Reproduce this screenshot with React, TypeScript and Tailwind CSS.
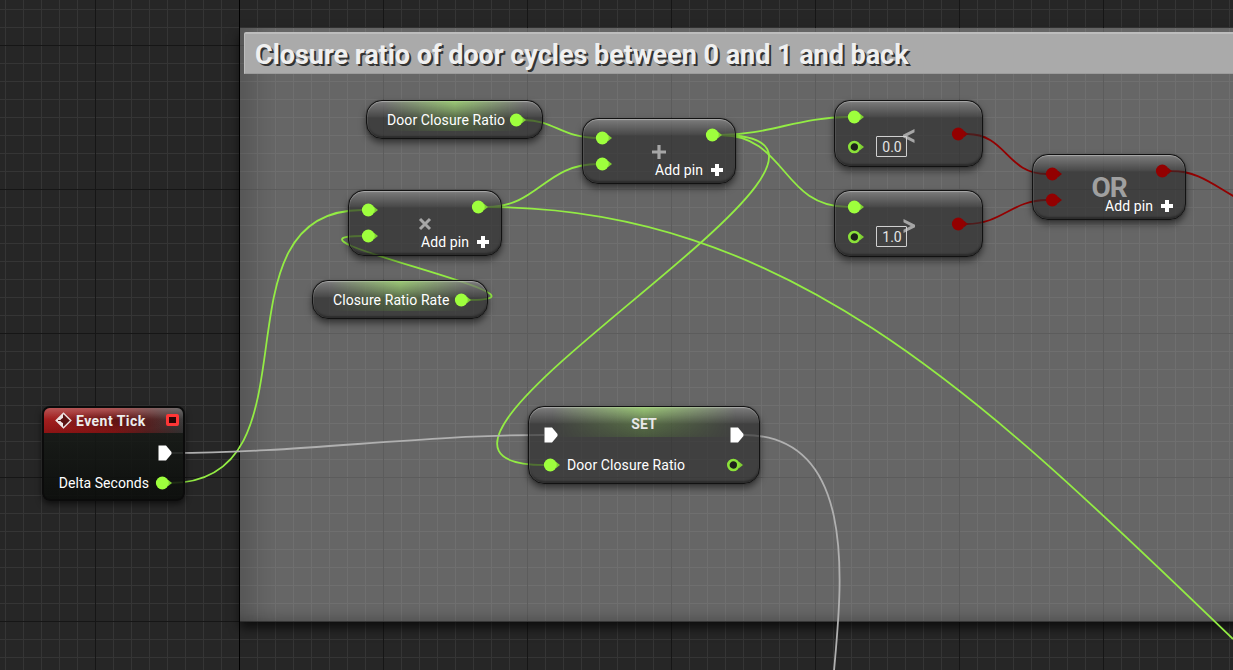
import type { ReactNode } from "react";

const GREEN = "#9eff3d";
const WIRE_GREEN = "#93ec44";
const RED = "#930000";

type Tone = "green" | "red";

function Pin({ tone = "green", hollow = false }: { tone?: Tone; hollow?: boolean }) {
  const main = tone === "green" ? GREEN : RED;
  return (
    <svg width="18" height="14" viewBox="0 0 18 14" className="block shrink-0">
      <path d="M12.6 3.4 17 7l-4.4 3.6z" fill={tone === "green" ? "#7fcf34" : "#860404"} />
      {hollow ? (
        <circle cx="7.3" cy="7" r="5" fill="#1d211b" stroke="#8be23a" strokeWidth="2.6" />
      ) : (
        <circle cx="7.3" cy="7" r="6.4" fill={main} />
      )}
    </svg>
  );
}

function ExecPin() {
  return (
    <svg width="14" height="16" viewBox="0 0 14 16" className="block shrink-0">
      <path d="M.5.5H8L13.5 7v2L8 15.5H.5z" fill="#fff" />
    </svg>
  );
}

function Gloss({ glow = false }: { glow?: boolean }) {
  return (
    <div className="pointer-events-none absolute inset-0 overflow-hidden rounded-[inherit]">
      {glow && (
        <div className="absolute inset-x-0 top-0 h-[30px] bg-gradient-to-b from-[rgba(165,225,115,0.75)] via-[rgba(125,180,80,0.42)] to-[rgba(95,145,60,0.3)] [mask-image:linear-gradient(to_right,transparent_10%,rgba(0,0,0,0.5)_30%,black_50%,rgba(0,0,0,0.5)_70%,transparent_90%)]" />
      )}
      <div className="h-[16px] bg-gradient-to-b from-white/32 to-white/4" />
    </div>
  );
}

const SHELL =
  "rounded-[16px] border-[1.5px] border-[#121212] bg-[rgba(42,42,42,0.64)] shadow-[0_0_1px_rgba(0,0,0,0.7),0_4px_7px_rgba(0,0,0,0.5),inset_0_1px_1px_rgba(255,255,255,0.35),inset_1px_0_1px_rgba(255,255,255,0.1),inset_0_-2px_2px_rgba(0,0,0,0.35)]";

function OperatorNode({ place, tone = "green", children }: { place: string; tone?: Tone; children: ReactNode }) {
  return (
    <div className={`absolute h-[66px] w-[154px] ${place}`}>
      <div className={`absolute inset-0 ${SHELL}`}>
        <Gloss />
      </div>
      <div className="absolute inset-0 flex items-center justify-center pt-[2px]">{children}</div>
      <div className="relative flex h-full justify-between px-[13px]">
        <div className="flex flex-col gap-3 pt-[13px]">
          <Pin tone={tone} />
          <Pin tone={tone} />
        </div>
        <div className="flex flex-col items-end pt-[10px]">
          <Pin tone={tone} />
          <div className="mt-[19px] flex items-center gap-2 leading-[18px]">
            <span className="tracking-[0.1px]">Add pin</span>
            <svg width="12" height="12" viewBox="0 0 12 12">
              <path d="M4 0h4v4h4v4H8v4H4V8H0V4h4z" fill="#fff" />
            </svg>
          </div>
        </div>
      </div>
    </div>
  );
}

function CompareNode({ place, value, children }: { place: string; value: string; children: ReactNode }) {
  return (
    <div className={`absolute h-[67px] w-[149px] ${place}`}>
      <div className={`absolute inset-0 ${SHELL}`}>
        <Gloss />
      </div>
      <svg width="12" height="14" viewBox="0 0 12 14" className="absolute left-[69px] top-[29px]">
        {children}
      </svg>
      <div className="relative flex h-full justify-between pl-[13px] pr-[14px]">
        <div className="flex flex-col pt-[10px]">
          <Pin />
          <div className="mt-3 flex items-center gap-[11px]">
            <Pin hollow />
            <span className="flex h-[21px] w-[31px] items-center justify-center rounded-[1px] border border-[#d0d0d0] pl-px pt-px text-[#e4e4e4]">
              {value}
            </span>
          </div>
        </div>
        <div className="pt-[27px]">
          <Pin tone="red" />
        </div>
      </div>
    </div>
  );
}

function GetterNode({ place, label }: { place: string; label: string }) {
  return (
    <div className={`absolute h-[39px] ${place}`}>
      <div className={`absolute inset-0 ${SHELL}`}>
        <Gloss glow />
      </div>
      <div className="relative flex h-full items-center justify-between pl-[21px] pr-4">
        <span className="pt-[2px] tracking-[0.09px]">{label}</span>
        <Pin />
      </div>
    </div>
  );
}

function SetterNode() {
  return (
    <div className="absolute left-[528px] top-[406px] h-[78px] w-[232px]">
      <div className={`absolute inset-0 ${SHELL}`}>
        <Gloss glow />
      </div>
      <div className="absolute inset-x-0 top-[9px] text-center font-bold leading-[18px] text-[#e8e8e8]">SET</div>
      <div className="relative flex h-full flex-col justify-between pb-3 pl-[15px] pr-4 pt-[21px]">
        <div className="flex justify-between pl-[1px]">
          <ExecPin />
          <ExecPin />
        </div>
        <div className="flex items-center justify-between">
          <div className="flex items-center gap-[6px]">
            <Pin />
            <span className="leading-[14px] tracking-[0.09px]">Door Closure Ratio</span>
          </div>
          <Pin hollow />
        </div>
      </div>
    </div>
  );
}

function EventNode() {
  return (
    <div className="absolute left-[42px] top-[406px] flex h-[95px] w-[143px] flex-col overflow-hidden rounded-[8px] border-2 border-[#0b0b0b] bg-[linear-gradient(to_bottom,rgba(26,30,26,0.85),rgba(11,13,11,0.88))] shadow-[0_3px_6px_rgba(0,0,0,0.6)]">
      <div className="flex h-[25px] items-center bg-[linear-gradient(to_bottom,rgba(255,255,255,0.28),rgba(255,255,255,0.04)_45%,rgba(0,0,0,0.12)),radial-gradient(ellipse_at_50%_50%,rgba(40,0,0,0.5),transparent_60%),linear-gradient(to_right,#a01616_0%,#8c1515_50%,#5c2020_74%,#353535_100%)] pl-[11px] pr-1">
        <svg width="17" height="17" viewBox="0 0 17 17" className="shrink-0">
          <path d="M8.5 1.2 15.8 8.5 8.5 15.8 1.2 8.5z" fill="#5c1212" stroke="#e8dcdc" strokeWidth="1.5" />
          <path d="M8 1.5v4.2L5.6 8.5 8 11.3v4.2L1 8.5z" fill="#eee4e4" />
          <path d="M7.6 6.6 5.7 8.5l1.9 1.9M5.7 8.5H3" stroke="#5c1212" strokeWidth="1.2" fill="none" />
        </svg>
        <span className="ml-1 whitespace-nowrap pt-px font-bold tracking-[0.45px] text-[#ececec]">Event Tick</span>
        <span className="-mt-px ml-auto box-border h-3 w-[13px] shrink-0 rounded-[2px] border-[3px] border-[#ff3636] bg-[#2a0505]" />
      </div>
      <div className="flex flex-1 flex-col items-end gap-[15px] pr-[11px] pt-3">
        <ExecPin />
        <div className="-mr-px flex items-center gap-[6px]">
          <span className="leading-[14px] tracking-[0.05px]">Delta Seconds</span>
          <Pin />
        </div>
      </div>
    </div>
  );
}

function CommentBox() {
  return (
    <div className="absolute left-[240px] top-[28px] flex h-[594px] w-[1040px] flex-col bg-[rgba(216,216,216,0.36)] pl-1 pt-1 shadow-[0_6px_10px_rgba(0,0,0,0.65),inset_0_-14px_12px_-10px_rgba(0,0,0,0.2),inset_30px_0_24px_-16px_rgba(0,0,0,0.16),inset_0_-1px_0_rgba(40,40,40,0.5)]">
      <div className="flex h-[42px] items-center rounded-tl-[2px] border-l border-t-2 border-[#bdbdbd] border-b border-b-[#9c9c9c] bg-[#aaaaaa] pl-[10px] pt-[3px] text-[27px] font-bold text-[#f0f0f0] [text-shadow:2px_2px_0_#333]">
        <span className="whitespace-nowrap tracking-[-0.03px]">Closure ratio of door cycles between 0 and 1 and back</span>
      </div>
    </div>
  );
}

const WIRES = [
  { d: "M524 120C554 120 562 138 598 138", c: WIRE_GREEN },
  { d: "M487 207C538 207 545 164 598 164", c: WIRE_GREEN },
  { d: "M487 207C794 207 993 409 1233 639", c: WIRE_GREEN },
  { d: "M720 135C769 135 799 117 848 117", c: WIRE_GREEN },
  { d: "M720 135C787 135 781 207 848 207", c: WIRE_GREEN },
  { d: "M720 135C942 135 326 465 545 465", c: WIRE_GREEN },
  { d: "M170 483C325 483 207 210 362 210", c: WIRE_GREEN },
  { d: "M469 300C576 300 262 236 362 236", c: WIRE_GREEN },
  { d: "M967 134C1007 134 1006 174 1047 174", c: RED },
  { d: "M967 224C1002 224 1012 200 1047 200", c: RED },
  { d: "M1171 171C1198 171 1212 184 1235 197", c: RED },
  { d: "M172 453C300 453 416 435 544 435", c: "#b0b0b0" },
  { d: "M744 435C860 435 841 590 834 671", c: "#b0b0b0" },
];

export default function App() {
  return (
    <div className="relative h-[670px] w-[1233px] overflow-hidden bg-[#262626] text-[14px] text-white [font-family:Roboto,'Liberation_Sans',sans-serif]">
      <div className="absolute inset-0 bg-[linear-gradient(to_right,#353535_1px,transparent_1px),linear-gradient(to_bottom,#353535_1px,transparent_1px)] bg-[length:18px_18px] bg-[position:5px_9px]" />
      <div className="absolute inset-0 bg-[linear-gradient(to_right,#161616_1px,transparent_1px),linear-gradient(to_bottom,#161616_1px,transparent_1px)] bg-[length:144px_144px] bg-[position:95px_45px]" />
      <div className="absolute inset-y-0 left-[239px] w-px bg-black" />
      <CommentBox />
      <svg width="1233" height="670" className="absolute inset-0" fill="none">
        {WIRES.map((w) => (
          <path key={w.d} d={w.d} stroke={w.c} strokeWidth="1.8" />
        ))}
      </svg>

      <GetterNode place="left-[366px] top-[100px] w-[177px]" label="Door Closure Ratio" />
      <GetterNode place="left-[312px] top-[280px] w-[176px]" label="Closure Ratio Rate" />

      <OperatorNode place="left-[348px] top-[190px]">
        <svg width="14" height="14" viewBox="0 0 14 14">
          <path d="M2 2l10 10M12 2 2 12" stroke="#a6a6a6" strokeWidth="3" />
        </svg>
      </OperatorNode>
      <OperatorNode place="left-[582px] top-[118px]">
        <svg width="14" height="14" viewBox="0 0 14 14">
          <path d="M7 0v14M0 7h14" stroke="#a6a6a6" strokeWidth="3.2" />
        </svg>
      </OperatorNode>
      <OperatorNode place="left-[1032px] top-[154px]" tone="red">
        <span className="text-[28px] font-bold leading-none tracking-[-1.2px] text-[#a0a0a0]">OR</span>
      </OperatorNode>

      <CompareNode place="left-[834px] top-[100px]" value="0.0">
        <path d="M11.5 0v3.2L4.3 7l7.2 3.8V14L0 8.2V5.8z" fill="#a6a6a6" />
      </CompareNode>
      <CompareNode place="left-[834px] top-[190px]" value="1.0">
        <path d="M.5 0v3.2L7.7 7 .5 10.8V14L12 8.2V5.8z" fill="#a6a6a6" />
      </CompareNode>

      <SetterNode />
      <EventNode />
    </div>
  );
}
